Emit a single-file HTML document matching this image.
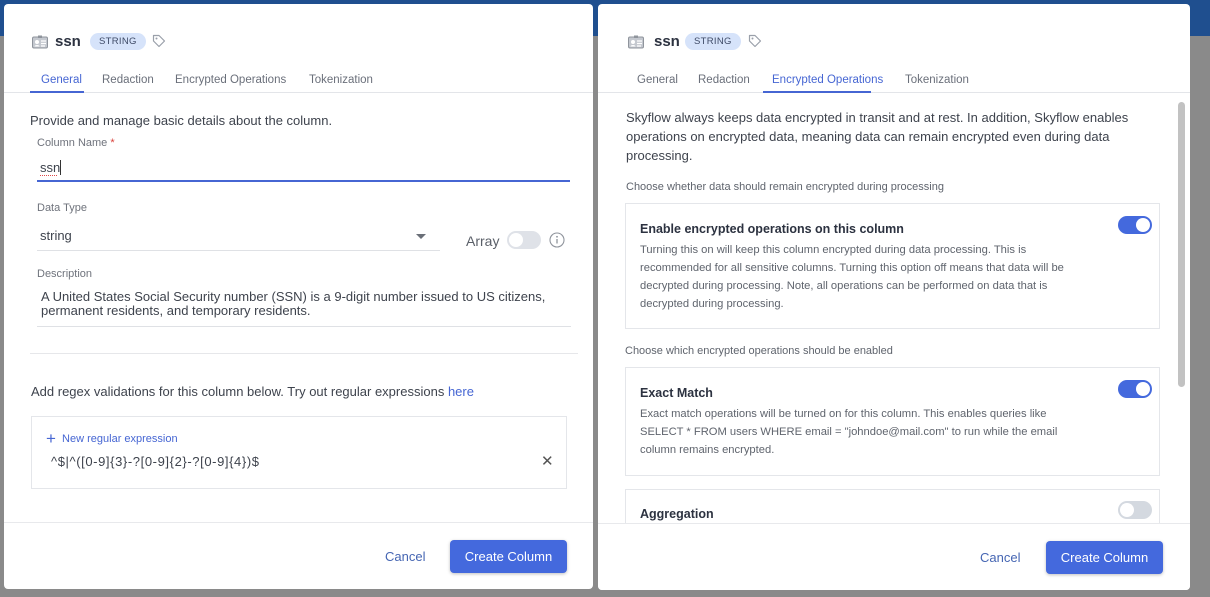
<!DOCTYPE html>
<html><head><meta charset="utf-8"><style>
*{box-sizing:border-box;margin:0;padding:0}
body{width:1210px;height:597px;background:#8a8a8a;position:relative;overflow:hidden;font-family:"Liberation Sans",sans-serif;color:#3a3f4a}
.topband{position:absolute;left:0;top:0;width:1210px;height:36px;background:#1f4f8f}
.panel{position:absolute;background:#fff;border-radius:4px;overflow:hidden}
.abs{position:absolute}
.hdr-title{font-weight:bold;font-size:15px;color:#2c3240}
.chip{background:#d6e3fa;color:#3e4a66;font-size:9.5px;border-radius:10px;height:17px;line-height:17px;padding:0 9px;letter-spacing:.3px}
.tabs{position:absolute;left:0;right:0;top:62px;height:27px;border-bottom:1px solid #e3e5e9}
.tab{position:absolute;top:8px;font-size:11.5px;color:#6a6f7a}
.tab.act{color:#4666d3}
.ul{position:absolute;bottom:-1px;height:2px;background:#4666d3}
.lbl{font-size:11px;color:#6f737c}
.txt{font-size:13px;color:#3e434d}
.line{position:absolute;height:1px;background:#dfe1e5}
.sw{position:absolute;width:34px;height:18px;border-radius:9px}
.sw.on{background:#4469dd}
.sw.off{background:#dfe2e8}
.sw i{position:absolute;top:2px;width:14px;height:14px;border-radius:50%;background:#fff}
.card{position:absolute;border:1px solid #e4e6ea;background:#fff}
.ct{font-size:12.5px;font-weight:bold;color:#2c3240}
.cd{font-size:11.2px;color:#5f646d;line-height:18px}
.btn{position:absolute;background:#4469dd;color:#fff;font-size:13px;border-radius:4px;text-align:center;box-shadow:0 1px 3px rgba(0,0,0,.25)}
.cancel{position:absolute;color:#4666b3;font-size:13px}
</style></head><body>
<div class="topband"></div>

<!-- LEFT PANEL -->
<div class="panel" style="left:4px;top:4px;width:589px;height:585px">
  <svg class="abs" style="left:28px;top:31px" width="16" height="14" viewBox="0 0 16 14"><rect x="0.5" y="2" width="15" height="11" rx="1.5" fill="#c4c8cf" stroke="#8f949c"/><circle cx="5" cy="7" r="2" fill="#fff"/><path d="M2.5 11.5c0-2 5-2 5 0" fill="#fff"/><path d="M9 6h5M9 8.5h5M9 11h4" stroke="#fff" stroke-width="1.2"/><rect x="6" y="0.5" width="4" height="2.5" fill="#8f949c"/></svg>
  <div class="abs hdr-title" style="left:51px;top:29px">ssn</div>
  <div class="abs chip" style="left:86px;top:29px">STRING</div>
  <svg class="abs" style="left:148px;top:30px" width="14" height="14" viewBox="0 0 14 14"><path d="M1.5 1.5h5.5l5.5 5.5-5.5 5.5-5.5-5.5z" fill="none" stroke="#9aa0aa" stroke-width="1.2" stroke-linejoin="round"/><circle cx="4.5" cy="4.5" r="1" fill="#9aa0aa"/></svg>
  <div class="tabs">
    <div class="tab act" style="left:37px">General</div>
    <div class="ul" style="left:26px;width:54px"></div>
    <div class="tab" style="left:98px">Redaction</div>
    <div class="tab" style="left:171px">Encrypted Operations</div>
    <div class="tab" style="left:305px">Tokenization</div>
  </div>
  <div class="abs txt" style="left:26px;top:109px">Provide and manage basic details about the column.</div>
  <div class="abs lbl" style="left:33px;top:133px">Column Name <span style="color:#d9403a">*</span></div>
  <div class="abs txt" style="left:36px;top:156px">ssn<span style="display:inline-block;width:1px;height:15px;background:#333;vertical-align:-3px"></span></div>
  <div class="abs" style="left:36px;top:171px;width:17px;border-bottom:1px dotted #e04a4a"></div>
  <div class="abs" style="left:33px;top:176px;width:533px;height:2px;background:#4666d3"></div>
  <div class="abs lbl" style="left:33px;top:198px">Data Type</div>
  <div class="abs txt" style="left:36px;top:224px">string</div>
  <div class="abs" style="left:412px;top:230px;width:0;height:0;border-left:5px solid transparent;border-right:5px solid transparent;border-top:5px solid #6a6f78"></div>
  <div class="line" style="left:33px;top:246px;width:403px"></div>
  <div class="abs" style="left:462px;top:229px;font-size:14px;color:#5a5f68">Array</div>
  <div class="sw off" style="left:503px;top:227px"><i style="left:2px"></i></div>
  <svg class="abs" style="left:545px;top:228px" width="16" height="16" viewBox="0 0 16 16"><circle cx="8" cy="8" r="7" fill="none" stroke="#8f949c" stroke-width="1.1"/><path d="M8 7v4.5" stroke="#8f949c" stroke-width="1.3"/><circle cx="8" cy="4.8" r=".9" fill="#8f949c"/></svg>
  <div class="abs lbl" style="left:33px;top:264px">Description</div>
  <div class="abs txt" style="left:37px;top:286px;line-height:14px;width:530px">A United States Social Security number (SSN) is a 9-digit number issued to US citizens, permanent residents, and temporary residents.</div>
  <div class="line" style="left:33px;top:322px;width:534px"></div>
  <div class="line" style="left:26px;top:349px;width:548px;background:#e6e7ea"></div>
  <div class="abs txt" style="left:27px;top:380px">Add regex validations for this column below. Try out regular expressions <span style="color:#4666d3">here</span></div>
  <div class="card" style="left:27px;top:412px;width:536px;height:73px">
    <div class="abs" style="left:14px;top:12px;font-size:11px;color:#4666d3"><span style="font-size:17px;vertical-align:-2px">+</span>&nbsp; New regular expression</div>
    <div class="abs" style="left:19px;top:37px;font-size:13px;letter-spacing:.6px;color:#3e434d">^$|^([0-9]{3}-?[0-9]{2}-?[0-9]{4})$</div>
    <div class="abs" style="left:509px;top:35px;font-size:15px;color:#555">✕</div>
  </div>
  <div class="line" style="left:0;top:518px;width:589px;background:#e8e9ec"></div>
  <div class="cancel" style="left:381px;top:545px">Cancel</div>
  <div class="btn" style="left:446px;top:536px;width:117px;height:33px;line-height:33px">Create Column</div>
</div>

<!-- RIGHT PANEL -->
<div class="panel" style="left:598px;top:4px;width:592px;height:586px">
  <svg class="abs" style="left:30px;top:31px" width="16" height="14" viewBox="0 0 16 14"><rect x="0.5" y="2" width="15" height="11" rx="1.5" fill="#c4c8cf" stroke="#8f949c"/><circle cx="5" cy="7" r="2" fill="#fff"/><path d="M2.5 11.5c0-2 5-2 5 0" fill="#fff"/><path d="M9 6h5M9 8.5h5M9 11h4" stroke="#fff" stroke-width="1.2"/><rect x="6" y="0.5" width="4" height="2.5" fill="#8f949c"/></svg>
  <div class="abs hdr-title" style="left:56px;top:29px">ssn</div>
  <div class="abs chip" style="left:87px;top:29px">STRING</div>
  <svg class="abs" style="left:150px;top:30px" width="14" height="14" viewBox="0 0 14 14"><path d="M1.5 1.5h5.5l5.5 5.5-5.5 5.5-5.5-5.5z" fill="none" stroke="#9aa0aa" stroke-width="1.2" stroke-linejoin="round"/><circle cx="4.5" cy="4.5" r="1" fill="#9aa0aa"/></svg>
  <div class="tabs">
    <div class="tab" style="left:39px">General</div>
    <div class="tab" style="left:100px">Redaction</div>
    <div class="tab act" style="left:174px">Encrypted Operations</div>
    <div class="ul" style="left:165px;width:108px"></div>
    <div class="tab" style="left:307px">Tokenization</div>
  </div>
  <div class="abs txt" style="left:28px;top:104px;line-height:19px;width:540px">Skyflow always keeps data encrypted in transit and at rest. In addition, Skyflow enables operations on encrypted data, meaning data can remain encrypted even during data processing.</div>
  <div class="abs" style="left:28px;top:177px;font-size:11px;color:#5f646d">Choose whether data should remain encrypted during processing</div>
  <div class="card" style="left:27px;top:199px;width:535px;height:126px">
    <div class="abs ct" style="left:14px;top:18px">Enable encrypted operations on this column</div>
    <div class="abs cd" style="left:14px;top:37px;width:445px">Turning this on will keep this column encrypted during data processing. This is recommended for all sensitive columns. Turning this option off means that data will be decrypted during processing. Note, all operations can be performed on data that is decrypted during processing.</div>
    <div class="sw on" style="left:492px;top:12px"><i style="left:18px"></i></div>
  </div>
  <div class="abs" style="left:27px;top:341px;font-size:11px;color:#5f646d">Choose which encrypted operations should be enabled</div>
  <div class="card" style="left:27px;top:363px;width:535px;height:109px">
    <div class="abs ct" style="left:14px;top:18px">Exact Match</div>
    <div class="abs cd" style="left:14px;top:37px;width:440px">Exact match operations will be turned on for this column. This enables queries like SELECT * FROM users WHERE email = "johndoe@mail.com" to run while the email column remains encrypted.</div>
    <div class="sw on" style="left:492px;top:12px"><i style="left:18px"></i></div>
  </div>
  <div class="card" style="left:27px;top:485px;width:535px;height:60px">
    <div class="abs ct" style="left:14px;top:17px">Aggregation</div>
    <div class="sw off" style="left:492px;top:11px;background:#d4d9e0"><i style="left:2px"></i></div>
  </div>
  <div class="abs" style="left:580px;top:98px;width:7px;height:285px;border-radius:4px;background:#c2c2c2"></div>
  <div class="abs" style="left:0;top:519px;width:592px;height:67px;background:#fff;border-top:1px solid #e8e9ec"></div>
  <div class="cancel" style="left:382px;top:546px">Cancel</div>
  <div class="btn" style="left:448px;top:537px;width:117px;height:33px;line-height:33px">Create Column</div>
</div>
</body></html>
